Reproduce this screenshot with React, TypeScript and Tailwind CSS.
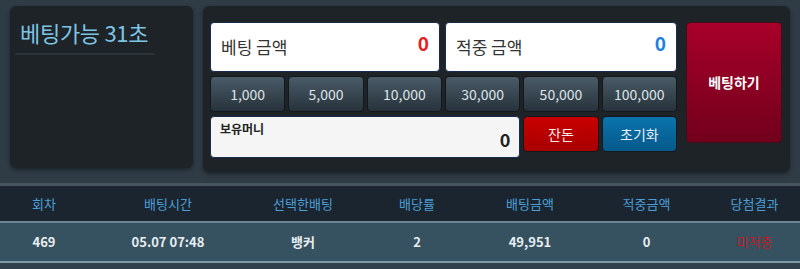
import React from "react";

const chips = ["1,000", "5,000", "10,000", "30,000", "50,000", "100,000"];

const cols = ["회차", "배팅시간", "선택한배팅", "배당률", "배팅금액", "적중금액", "당첨결과"];

const row = ["469", "05.07 07:48", "뱅커", "2", "49,951", "0"];

export default function App() {
  return (
    <div
      className="w-[800px] h-[269px] overflow-hidden bg-[#2f3b45] flex flex-col"
      style={{ fontFamily: '"Noto Sans CJK KR", "Noto Sans", sans-serif' }}
    >
      {/* Top */}
      <div className="h-[183px] flex gap-[10px] pl-[10px] pt-[6px]">
        <div className="w-[183px] h-[162px] rounded-md bg-[#1d2327] shadow-[0_2px_4px_rgba(0,0,0,0.4)] pl-[5px] pt-[12px]">
          <div className="text-[22px] leading-[28px] text-[#7ec4e4] pl-[5px] tracking-[-0.3px]">
            베팅가능 31초
          </div>
          <div className="mt-[7px] w-[140px] h-[2px] bg-[#2c343b]" />
        </div>

        <div className="w-[587px] h-[166px] rounded-md bg-[#1d2327] shadow-[0_2px_4px_rgba(0,0,0,0.4)] pl-[7px] pt-[16px] flex gap-[9px]">
          <div className="w-[467px] flex flex-col gap-[4px]">
            <div className="flex gap-[5px] h-[50px]">
              <div className="w-[230px] rounded-[4px] bg-white border border-[#1a2a50] flex items-start justify-between px-[10px] pt-[8px]">
                <span className="text-[17px] text-[#333] pt-[3px]">베팅 금액</span>
                <span className="text-[19px] font-bold text-[#e52020] leading-[24px]">0</span>
              </div>
              <div className="w-[232px] rounded-[4px] bg-white border border-[#1a2a50] flex items-start justify-between px-[10px] pt-[8px]">
                <span className="text-[17px] text-[#333] pt-[3px]">적중 금액</span>
                <span className="text-[19px] font-bold text-[#1c7fe0] leading-[24px]">0</span>
              </div>
            </div>

            <div className="grid grid-cols-6 gap-[3px] h-[36px]">
              {chips.map((c) => (
                <div
                  key={c}
                  className="rounded-[4px] border border-[#12181c] bg-gradient-to-b from-[#4a5b67] to-[#27333c] flex items-center justify-center text-[14px] text-[#dfe4e8]"
                >
                  {c}
                </div>
              ))}
            </div>

            <div className="grid grid-cols-6 gap-[3px] items-start">
              <div className="col-span-4 h-[42px] rounded-[4px] bg-[#f5f5f5] border border-[#1a2a50] flex items-start justify-between px-[9px] pt-[3px]">
                <span className="text-[12px] font-bold text-[#222]">보유머니</span>
                <span className="text-[18px] font-bold text-[#222] pt-[7px] leading-[24px]">0</span>
              </div>
              <div className="h-[36px] rounded-[4px] border border-[#12181c] bg-gradient-to-b from-[#c80000] to-[#a80000] flex items-center justify-center text-[14px] text-[#f4e8e8]">
                잔돈
              </div>
              <div className="h-[36px] rounded-[4px] border border-[#12181c] bg-gradient-to-b from-[#0b74ad] to-[#05598a] flex items-center justify-center text-[14px] text-[#e6f0f6]">
                초기화
              </div>
            </div>
          </div>

          <div className="w-[96px] h-[121px] rounded-[4px] border border-[#40101a] bg-gradient-to-b from-[#a8002a] to-[#72001c] flex items-center justify-center text-[14px] font-bold text-white">
            베팅하기
          </div>
        </div>
      </div>

      {/* Table */}
      <div className="h-[3px] bg-[#46545f]" />
      <div className="h-[35px] bg-[#1b2530] grid grid-cols-[88px_160px_110px_118px_108px_125px_1fr] items-center">
        {cols.map((c) => (
          <div key={c} className="text-center text-[13px] text-[#4b9fd6]">
            {c}
          </div>
        ))}
      </div>
      <div className="h-[2px] bg-[#6d8594]" />
      <div className="h-[38px] bg-[#36515f] grid grid-cols-[88px_160px_110px_118px_108px_125px_1fr] items-center">
        {row.map((c, i) => (
          <div key={i} className="text-center text-[13px] font-bold text-[#e8eef2]">
            {c}
          </div>
        ))}
        <div className="text-center text-[13px] text-[#c01c26]">미적중</div>
      </div>
      <div className="h-[2px] bg-[#7d98a8]" />
      <div className="flex-1 bg-[#2f3f4c]" />
    </div>
  );
}
